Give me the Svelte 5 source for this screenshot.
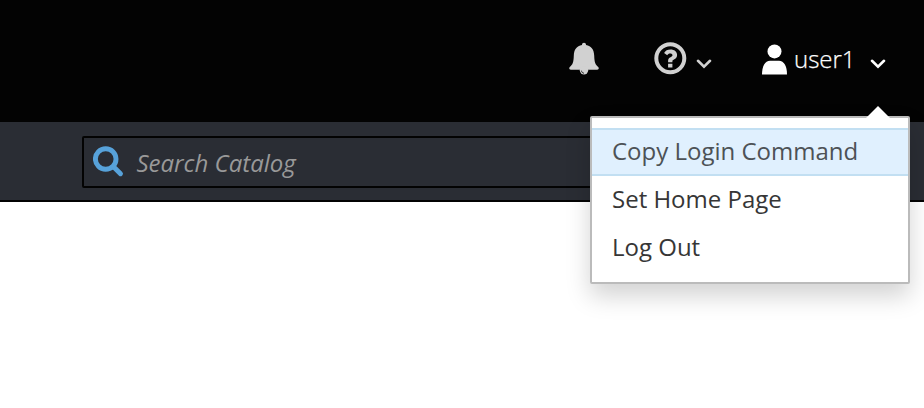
<script>
  const items = ['Copy Login Command', 'Set Home Page', 'Log Out'];
</script>

{#snippet chevron()}
  <svg class="chevron" width="16" height="10" viewBox="0 0 16 10"><path d="M2 1.8 8 7.6 14 1.8" /></svg>
{/snippet}

<div class="page">
  <header>
    <button class="bell" aria-label="Notifications">
      <svg width="30" height="34" viewBox="0 0 30 34">
        <path fill="#d1d1d1" d="M15 .8c1.2 0 2 .8 2 2v.2c5.400 1 8 4.600 8.200 10.500.2 7.200 1.300 9.100 3.800 11.300 1.300 1.100.9 2.900-.8 2.900H1.800C.1 27.700-.3 25.900 1 24.800c2.500-2.200 3.600-4.100 3.800-11.300.2-5.900 2.800-9.500 8.200-10.500v-.2c0-1.200.8-2 2-2Z" />
        <circle cx="15" cy="28.300" r="4.200" fill="#d1d1d1" />
        <path d="M12.500 28.700c.1 1.500 1.100 2.400 2.500 2.500" fill="none" stroke="#030303" stroke-width=".8" />
      </svg>
    </button>
    <button class="help" aria-label="Help">
      <svg width="33" height="33" viewBox="0 0 33 33">
        <circle cx="16.300" cy="16.300" r="14" fill="none" stroke="#d1d1d1" stroke-width="4" />
        <path fill="#d1d1d1" d="M14.100 20.200v-1.600c0-1.800 1-2.600 2.400-3.400 1.200-.7 2-1.100 2-2 0-1.200-1.100-1.700-2.400-1.700-1.400 0-2.100.7-2.900 1.700L10.100 10.900C11.500 8.600 13.400 7.500 16.500 7.500c3.800 0 6.600 2.200 6.600 5.500 0 2.200-1.200 3.500-3.100 4.600-1.200.7-1.600.9-1.600 1.600v1ZM14.100 21.700h4.300v3.900h-4.300Z" />
      </svg>
      {@render chevron()}
    </button>
    <button class="account">
      <svg width="26" height="32" viewBox="0 0 26 32">
        <circle cx="12.500" cy="7.400" r="7" fill="#fff" />
        <path fill="#fff" d="M0 30.500C0 22 3 16.700 8 16.700h9c5 0 8 5.300 8 13.800Z" />
      </svg>
      <span>user1</span>
      {@render chevron()}
    </button>
  </header>
  <div class="searchbar">
    <div class="search">
      <svg width="32" height="32" viewBox="0 0 32 32">
        <circle cx="12.700" cy="13" r="10.300" />
        <path d="m20.500 20.700 7 7" />
      </svg>
      <span>Search Catalog</span>
    </div>
  </div>
  <div class="menu">
    <svg class="pointer" width="24" height="14" viewBox="0 0 24 14"><path d="M0 12 12 0 24 12v2H0Z" fill="#fff" /></svg>
    {#each items as item, i}
      <div class="item" class:active={i === 0}>{item}</div>
    {/each}
  </div>
</div>

<style>
  :global(body) { margin: 0; background: #fff; }
  .page {
    position: relative;
    height: 408px;
    overflow: hidden;
    font-family: "Open Sans", sans-serif;
    font-size: 24px;
  }
  svg { display: block; flex: none; }
  header {
    box-sizing: border-box;
    height: 122px;
    padding: 42px 38px 0 0;
    background: #030303;
    display: flex;
    justify-content: flex-end;
    align-items: flex-start;
  }
  button {
    display: flex;
    align-items: flex-start;
    padding: 0;
    border: 0;
    background: none;
    color: #fff;
    font: inherit;
  }
  .bell { margin-right: 55px; }
  .help { margin-right: 50px; }
  .help .chevron { margin: 17px 0 0 9px; stroke: #d1d1d1; }
  .chevron { fill: none; stroke: #fff; stroke-width: 2.6; stroke-linecap: round; }
  .account { padding-top: 2px; }
  .account span {
    width: 76px;
    margin-left: 6px;
    line-height: 30px;
    font-weight: 300;
    text-align: left;
    -webkit-text-stroke: 0.25px #fff;
  }
  .account .chevron { margin-top: 15px; }
  .searchbar {
    box-sizing: border-box;
    height: 80px;
    padding: 14px 80px 0 82px;
    background: #2a2d34;
    border-bottom: 2px solid #030303;
  }
  .search {
    box-sizing: border-box;
    height: 52px;
    padding-left: 9px;
    border: 2px solid #030303;
    border-radius: 2px;
    display: flex;
    align-items: center;
    gap: 11.5px;
  }
  .search svg { fill: none; stroke: #57a2da; stroke-width: 4.900; stroke-linecap: round; }
  .search span { color: #999; font-style: italic; line-height: 34px; padding-top: 2px; }
  .menu {
    position: absolute;
    left: 590px;
    top: 116px;
    box-sizing: border-box;
    width: 320px;
    height: 168px;
    padding-top: 10px;
    border: 2px solid #bbb;
    border-radius: 2px;
    background: #fff;
    box-shadow: 0 12px 24px rgba(0, 0, 0, 0.175);
  }
  .pointer { position: absolute; left: 274px; top: -12px; }
  .item {
    box-sizing: border-box;
    height: 48px;
    padding-left: 20px;
    border: solid transparent;
    border-width: 2px 0;
    line-height: 42px;
    color: #363636;
  }
  .item.active { background: #e0f0fe; border-color: #c2dff2; color: #4d5256; }
</style>
